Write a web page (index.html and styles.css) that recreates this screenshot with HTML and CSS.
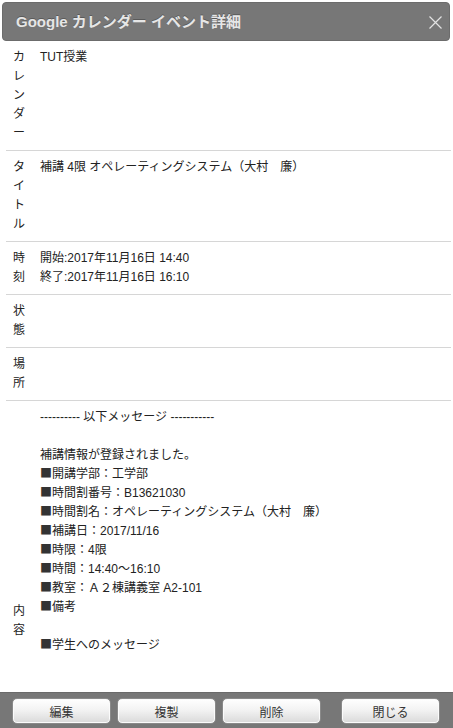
FILE: index.html
```html
<!DOCTYPE html>
<html lang="ja">
<head>
<meta charset="utf-8">
<title>Google カレンダー イベント詳細</title>
<link rel="stylesheet" href="styles.css">
</head>
<body>
<div class="dialog">
  <div class="header">
    <span class="title">Google カレンダー イベント詳細</span>
    <svg class="close" width="13" height="13" viewBox="0 0 13 13"><path d="M0.5 0.5L12.5 12.5M12.5 0.5L0.5 12.5" stroke="#e2e2e2" stroke-width="1.2" fill="none"/></svg>
  </div>
  <div class="rows">
    <div class="row">
      <div class="label">カレンダー</div>
      <div class="value">TUT授業</div>
    </div>
    <div class="row">
      <div class="label">タイトル</div>
      <div class="value">補講 4限 オペレーティングシステム（大村　廉）</div>
    </div>
    <div class="row">
      <div class="label">時刻</div>
      <div class="value">開始:2017年11月16日 14:40<br>終了:2017年11月16日 16:10</div>
    </div>
    <div class="row">
      <div class="label">状態</div>
      <div class="value"></div>
    </div>
    <div class="row">
      <div class="label">場所</div>
      <div class="value"></div>
    </div>
    <div class="row last">
      <div class="label label-mid">内容</div>
      <div class="value">---------- 以下メッセージ -----------<br><br>補講情報が登録されました。<br><span class="sq">■</span>開講学部：工学部<br><span class="sq">■</span>時間割番号：B13621030<br><span class="sq">■</span>時間割名：オペレーティングシステム（大村　廉）<br><span class="sq">■</span>補講日：2017/11/16<br><span class="sq">■</span>時限：4限<br><span class="sq">■</span>時間：14:40〜16:10<br><span class="sq">■</span>教室：Ａ２棟講義室 A2-101<br><span class="sq">■</span>備考<br><br><span class="sq">■</span>学生へのメッセージ<br><br><br><br><br><br><br><br><br>&nbsp;</div>
    </div>
  </div>
</div>
<div class="buttonbar">
  <button class="btn">編集</button>
  <button class="btn">複製</button>
  <button class="btn">削除</button>
  <button class="btn btn-close">閉じる</button>
</div>
</body>
</html>
```
FILE: styles.css
```css
html, body {
  margin: 0;
  padding: 0;
  overflow: hidden;
  background: #fff;
}
body {
  font-family: "Liberation Sans", "Noto Sans CJK JP", sans-serif;
  font-size: 12px;
  line-height: 19px;
  color: #222;
}
.dialog {
  padding-top: 2px;
}
.header {
  margin: 0 3px 0 2px;
  height: 37px;
  background: #777;
  border: 1px solid #6c6c6c;
  border-radius: 4px;
  display: flex;
  align-items: center;
  justify-content: space-between;
  padding: 0 7px 0 13px;
}
.title {
  font-family: "Liberation Sans", "Noto Sans CJK JP", sans-serif;
  font-weight: bold;
  font-size: 15px;
  color: #e6e6e6;
  text-shadow: 0 -1px 0 #5a5a5a;
}
.close {
  display: block;
  margin-top: 1px;
}
.rows {
  margin: 0 2px 0 6px;
}
.row {
  display: flex;
  align-items: flex-start;
  padding: 7px 0;
  border-bottom: 1px solid #d6d6d6;
}
.row.last {
  border-bottom: none;
}
.label {
  width: 12px;
  margin-left: 7px;
  margin-right: 15px;
  word-break: break-all;
  flex-shrink: 0;
  min-height: 38px;
}
.label-mid {
  align-self: center;
  padding-top: 7px;
}
.value {
  flex: 1;
  min-height: 38px;
}
.sq {
  font-family: "Noto Sans CJK JP", sans-serif;
  line-height: 1;
  color: #333;
}
.buttonbar {
  position: fixed;
  left: 0;
  right: 0;
  bottom: 0;
  height: 36px;
  box-sizing: border-box;
  background: #777;
  border-top: 1px solid #6a6a6a;
  display: flex;
  gap: 6px;
  padding: 5px 13px 4px 12px;
}
.btn {
  width: 99px;
  height: 26px;
  border: 1px solid #8a8a8a;
  border-radius: 5px;
  background: linear-gradient(#ffffff, #f3f3f3 45%, #d9d9d9);
  font-family: "Liberation Sans", "Noto Sans CJK JP", sans-serif;
  font-size: 12px;
  color: #333;
  padding: 0;
  box-shadow: inset 0 0 0 1px #fbfbfb;
}
.btn-close {
  margin-left: auto;
}
```
